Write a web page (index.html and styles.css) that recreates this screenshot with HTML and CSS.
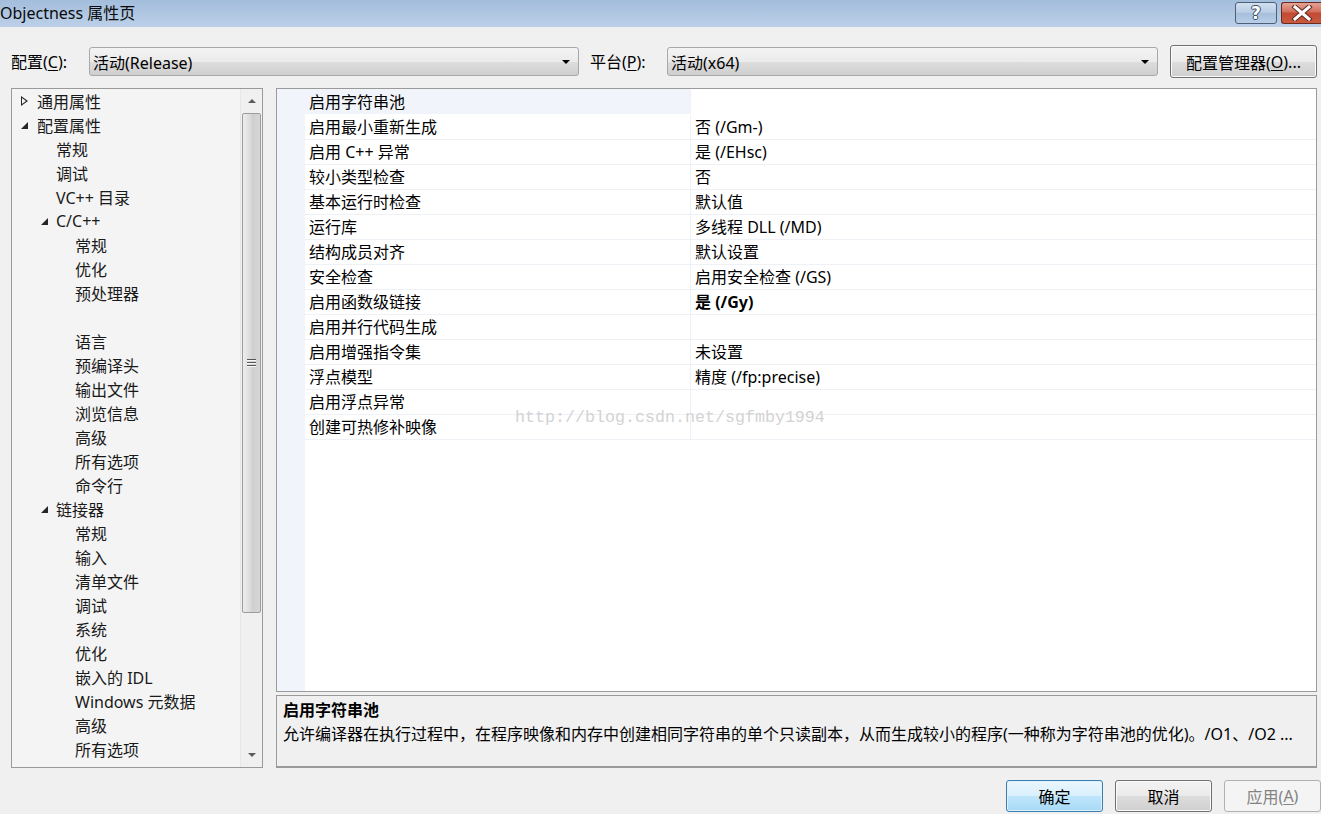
FILE: index.html
```html
<!DOCTYPE html>
<html lang="zh-CN">

<head>
  <meta charset="UTF-8">
  <title>Objectness 属性页</title>
  <link rel="stylesheet" href="styles.css">
</head>

<body>
  <div class="titlebar">
    <span class="title">Objectness 属性页</span>
    <div class="caption-btns">
      <div class="cap-btn help"><span>?</span></div>
      <div class="cap-btn close">
        <svg width="22" height="16" viewBox="0 0 22 16">
          <path d="M4 2 L18 14 M18 2 L4 14" stroke="#5a2a22" stroke-width="5" stroke-linecap="square" />
          <path d="M4 2 L18 14 M18 2 L4 14" stroke="#ffffff" stroke-width="3" stroke-linecap="square" />
        </svg>
      </div>
    </div>
  </div>

  <div class="toolbar">
    <label class="field-label cfg-label">配置(<u>C</u>):</label>
    <div class="combo cfg-combo"><span>活动(Release)</span><i class="combo-arrow"></i></div>
    <label class="field-label plat-label">平台(<u>P</u>):</label>
    <div class="combo plat-combo"><span>活动(x64)</span><i class="combo-arrow"></i></div>
    <div class="btn mgr-btn">配置管理器(<u>O</u>)...</div>
  </div>

  <div class="main">
    <div class="tree">
      <div class="tree-list">
        <div class="node lv0"><i class="arrow closed"></i>通用属性</div>
        <div class="node lv0"><i class="arrow open"></i>配置属性</div>
        <div class="node lv1">常规</div>
        <div class="node lv1">调试</div>
        <div class="node lv1">VC++ 目录</div>
        <div class="node lv1 parent"><i class="arrow open"></i>C/C++</div>
        <div class="node lv2">常规</div>
        <div class="node lv2">优化</div>
        <div class="node lv2">预处理器</div>
        <div class="node lv2"></div>
        <div class="node lv2">语言</div>
        <div class="node lv2">预编译头</div>
        <div class="node lv2">输出文件</div>
        <div class="node lv2">浏览信息</div>
        <div class="node lv2">高级</div>
        <div class="node lv2">所有选项</div>
        <div class="node lv2">命令行</div>
        <div class="node lv1 parent"><i class="arrow open"></i>链接器</div>
        <div class="node lv2">常规</div>
        <div class="node lv2">输入</div>
        <div class="node lv2">清单文件</div>
        <div class="node lv2">调试</div>
        <div class="node lv2">系统</div>
        <div class="node lv2">优化</div>
        <div class="node lv2">嵌入的 IDL</div>
        <div class="node lv2">Windows 元数据</div>
        <div class="node lv2">高级</div>
        <div class="node lv2">所有选项</div>
      </div>
      <div class="scrollbar">
        <div class="sb-arrow up"><i></i></div>
        <div class="sb-thumb"><span class="grip"></span></div>
        <div class="sb-track"></div>
        <div class="sb-arrow down"><i></i></div>
      </div>
    </div>

    <div class="right">
      <div class="grid">
        <div class="gutter"></div>
        <div class="rows">
          <div class="row selected"><div class="name">启用字符串池</div><div class="value"></div></div>
          <div class="row"><div class="name">启用最小重新生成</div><div class="value">否 (/Gm-)</div></div>
          <div class="row"><div class="name">启用 C++ 异常</div><div class="value">是 (/EHsc)</div></div>
          <div class="row"><div class="name">较小类型检查</div><div class="value">否</div></div>
          <div class="row"><div class="name">基本运行时检查</div><div class="value">默认值</div></div>
          <div class="row"><div class="name">运行库</div><div class="value">多线程 DLL (/MD)</div></div>
          <div class="row"><div class="name">结构成员对齐</div><div class="value">默认设置</div></div>
          <div class="row"><div class="name">安全检查</div><div class="value">启用安全检查 (/GS)</div></div>
          <div class="row"><div class="name">启用函数级链接</div><div class="value bold">是 (/Gy)</div></div>
          <div class="row"><div class="name">启用并行代码生成</div><div class="value"></div></div>
          <div class="row"><div class="name">启用增强指令集</div><div class="value">未设置</div></div>
          <div class="row"><div class="name">浮点模型</div><div class="value">精度 (/fp:precise)</div></div>
          <div class="row"><div class="name">启用浮点异常</div><div class="value"></div></div>
          <div class="row"><div class="name">创建可热修补映像</div><div class="value"></div></div>
        </div>
        <div class="watermark">http://blog.csdn.net/sgfmby1994</div>
      </div>
      <div class="desc">
        <div class="desc-title">启用字符串池</div>
        <div class="desc-text">允许编译器在执行过程中，在程序映像和内存中创建相同字符串的单个只读副本，从而生成较小的程序(一种称为字符串池的优化)。/O1、/O2 ...</div>
      </div>
    </div>
  </div>

  <div class="footer">
    <div class="btn dlg-btn default">确定</div>
    <div class="btn dlg-btn">取消</div>
    <div class="btn dlg-btn disabled">应用(<u>A</u>)</div>
  </div>
</body>

</html>
```

FILE: styles.css
```css
body {
  margin: 0;
  width: 1321px;
  height: 814px;
  overflow: hidden;
  background-color: #f0f0f0;
  color: #000000;
  font-family: "Noto Sans", "Noto Sans CJK SC", sans-serif;
  font-size: 16px;
}

u {
  text-decoration-thickness: 1px;
  text-underline-offset: 2px;
}

/* title bar */
.titlebar {
  height: 27px;
  display: flex;
  align-items: flex-start;
  background: linear-gradient(to bottom, #a3bddc, #bcd0e8);
}

.title {
  line-height: 27px;
  font-size: 16px;
  color: #0a0a0a;
}

.caption-btns {
  margin-left: auto;
  display: flex;
  gap: 4px;
  margin-top: 2px;
}

.cap-btn {
  height: 22px;
  border: 1px solid #4d6078;
  border-radius: 3px;
  display: flex;
  align-items: center;
  justify-content: center;
  box-sizing: border-box;
}

.cap-btn.help {
  width: 42px;
  background: linear-gradient(to bottom, #d2e0f0 0%, #b7cbe3 50%, #a6bedb 51%, #b9cfe8 100%);
}

.cap-btn.help span {
  font-family: "DejaVu Sans", sans-serif;
  font-weight: bold;
  font-size: 17px;
  color: #ffffff;
  line-height: 20px;
  text-shadow: 0 0 1px #3b4d66, 1px 0 0 #3b4d66, -1px 0 0 #3b4d66, 0 1px 0 #3b4d66, 0 -1px 0 #3b4d66;
}

.cap-btn.close {
  width: 40px;
  border-color: #6b2a22;
  border-right: none;
  border-radius: 3px 0 0 3px;
  background: linear-gradient(to bottom, #e4a394 0%, #d26e5a 45%, #c24a33 50%, #c95a3e 100%);
}

/* config row */
.toolbar {
  height: 61px;
  box-sizing: border-box;
  padding: 8px 0 0 11px;
  display: flex;
  align-items: center;
}

.field-label {
  line-height: 20px;
}

.cfg-label {
  width: 78px;
}

.plat-label {
  width: 77px;
  margin-left: 11px;
}

.combo {
  height: 29px;
  box-sizing: border-box;
  border: 1px solid #a8a8a8;
  border-radius: 3px;
  background: linear-gradient(to bottom, #f3f3f3 0%, #ebebeb 50%, #dddddd 51%, #cfcfcf 100%);
  display: flex;
  align-items: center;
  padding-left: 3px;
}

.cfg-combo {
  width: 490px;
}

.plat-combo {
  width: 491px;
}

.combo-arrow {
  margin-left: auto;
  margin-right: 8px;
  width: 0;
  height: 0;
  border-left: 4px solid transparent;
  border-right: 4px solid transparent;
  border-top: 4px solid #000000;
}

.btn {
  box-sizing: border-box;
  border: 1px solid #707070;
  border-radius: 3px;
  background: linear-gradient(to bottom, #f2f2f2 0%, #ebebeb 50%, #dddddd 51%, #cfcfcf 100%);
  display: flex;
  align-items: center;
  justify-content: center;
  box-shadow: inset 0 0 0 1px #fbfbfb;
}

.mgr-btn {
  width: 147px;
  height: 33px;
  margin-left: 12px;
}

/* main area */
.main {
  height: 680px;
  display: flex;
  padding-left: 11px;
  gap: 13px;
}

.tree {
  width: 252px;
  box-sizing: border-box;
  border: 1px solid #9a9a9a;
  background-color: #f4f4f4;
  display: flex;
}

.tree-list {
  flex: 1;
  color: #1a1a1a;
}

.node {
  height: 24px;
  display: flex;
  align-items: center;
  white-space: nowrap;
}

.lv0 {
  padding-left: 9px;
}

.lv1 {
  padding-left: 44px;
}

.lv1.parent {
  padding-left: 29px;
}

.lv2 {
  padding-left: 63px;
}

.arrow {
  width: 15px;
  height: 24px;
  flex: none;
  position: relative;
}

.lv0 .arrow {
  width: 16px;
}

.arrow.open::before {
  content: "";
  position: absolute;
  left: 0;
  top: 9px;
  width: 0;
  height: 0;
  border-left: 7px solid transparent;
  border-bottom: 7px solid #262626;
}

.arrow.closed::before {
  content: "";
  position: absolute;
  left: 0;
  top: 7px;
  width: 0;
  height: 0;
  border-top: 5px solid transparent;
  border-bottom: 5px solid transparent;
  border-left: 7px solid #262626;
}

.arrow.closed::after {
  content: "";
  position: absolute;
  left: 1px;
  top: 9px;
  width: 0;
  height: 0;
  border-top: 3px solid transparent;
  border-bottom: 3px solid transparent;
  border-left: 4px solid #f4f4f4;
}

.scrollbar {
  width: 21px;
  display: flex;
  flex-direction: column;
  background-color: #f0f0f0;
  border-left: 1px solid #e6e6e6;
}

.sb-arrow {
  height: 24px;
  display: flex;
  align-items: center;
  justify-content: center;
  flex: none;
}

.sb-arrow i {
  width: 0;
  height: 0;
  border-left: 4px solid transparent;
  border-right: 4px solid transparent;
}

.sb-arrow.up i {
  border-bottom: 4px solid #5c5c5c;
}

.sb-arrow.down i {
  border-top: 4px solid #5c5c5c;
}

.sb-thumb {
  height: 500px;
  margin: 0 1px;
  box-sizing: border-box;
  border: 1px solid #9c9c9c;
  border-radius: 2px;
  background: linear-gradient(to right, #ededed, #dadada 45%, #cfcfcf 55%, #d6d6d6);
  display: flex;
  align-items: center;
  justify-content: center;
}

.grip {
  width: 9px;
  height: 9px;
  background: repeating-linear-gradient(to bottom, #555555 0, #555555 1px, #f8f8f8 1px, #f8f8f8 2px, transparent 2px, transparent 3px);
}

.sb-track {
  flex: 1;
}

.right {
  flex: 1;
  display: flex;
  flex-direction: column;
  gap: 3px;
  margin-right: 4px;
}

.grid {
  position: relative;
  height: 604px;
  box-sizing: border-box;
  border: 1px solid #9a9a9a;
  background-color: #ffffff;
  display: flex;
}

.gutter {
  width: 28px;
  background-color: #f1f5fb;
}

.rows {
  flex: 1;
  padding-top: 1px;
}

.row {
  display: grid;
  grid-template-columns: 385px 1fr;
  height: 25px;
  box-sizing: border-box;
  border-bottom: 1px solid #eef1f6;
}

.row.selected {
  border-bottom-color: #ffffff;
}

.row.selected .name {
  margin-top: -1px;
  padding-top: 1px;
}

.name,
.value {
  line-height: 24px;
  padding-left: 4px;
  white-space: nowrap;
}

.value {
  border-left: 1px solid #eef1f6;
}

.row.selected .name {
  background-color: #f1f5fb;
}

.value.bold {
  font-weight: bold;
}

.watermark {
  position: absolute;
  left: 238px;
  top: 319px;
  font-family: "Liberation Mono", monospace;
  font-size: 16.67px;
  line-height: 20px;
  color: #d3d3d3;
}

.desc {
  flex: 1;
  box-sizing: border-box;
  border: 1px solid #9a9a9a;
  border-bottom-width: 2px;
  padding: 2px 6px;
  line-height: 24px;
}

.desc-title {
  font-weight: bold;
}

.desc-text {
  white-space: nowrap;
}

/* dialog buttons */
.footer {
  margin-top: 12px;
  display: flex;
  justify-content: flex-end;
  gap: 12px;
}

.dlg-btn {
  width: 97px;
  height: 32px;
}

.dlg-btn.default {
  border-color: #3c7fb1;
  background: linear-gradient(to bottom, #eaf6fd 0%, #d9f0fc 50%, #bee6fd 51%, #a7d9f5 100%);
  box-shadow: inset 0 0 0 1px #def1fc;
}

.dlg-btn.disabled {
  border-color: #adb2b5;
  background: #f4f4f4;
  color: #838383;
  box-shadow: none;
}
```
